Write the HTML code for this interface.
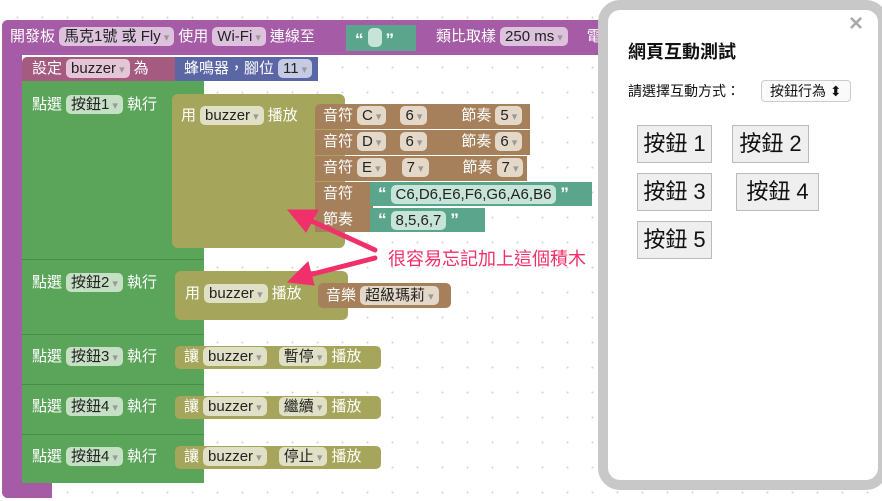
<!DOCTYPE html>
<html><head><meta charset="utf-8"><style>
*{box-sizing:border-box;margin:0;padding:0}
body{width:882px;height:501px;overflow:hidden;position:relative;background:#fff;font-family:"Liberation Sans","Noto Sans CJK TC",sans-serif;font-size:15px;color:#fff}
.grid{position:absolute;inset:0;background-image:radial-gradient(circle,#d4d4d4 0.8px,transparent 1.2px);background-size:25px 25px;background-position:5px 5px}
.b{position:absolute}
.t{position:absolute;white-space:nowrap;font-size:15px;line-height:20px}
.f{display:inline-block;border-radius:5px;padding:0 5px 0 5px;height:19px;line-height:19px;color:#222;margin:0 4px}
.f:after{content:" ▾";font-size:11px;color:#999}
.pu{background:#a55ba5}.pf{background:#dcc2dc}
.gr{background:#5ba55b}.gf{background:#c6e0c6}
.ol{background:#a5a55b}.of{background:#e0e0c6}
.br{background:#a5805b}.bf{background:#e4d8c8}
.te{background:#5ba58c}.tf{background:#c6e4d8}
.tf:after{content:""}
.btn{position:absolute;background:#efefef;border:1px solid #bbb;color:#111;font-size:22px;line-height:36px;text-align:center}
</style></head><body>
<div class="grid"></div>
<div class="b pu" style="left:2px;top:20px;width:736px;height:35px;border-radius:6px 0 0 0"></div>
<div class="b pu" style="left:2px;top:20px;width:20px;height:478px;border-radius:6px 0 0 6px"></div>
<div class="b pu" style="left:2px;top:483px;width:50px;height:15px;border-radius:0 0 0 6px"></div>
<div class="t" style="left:10px;top:27px">開發板<span class="f pf">馬克1號 或 Fly</span>使用<span class="f pf">Wi-Fi</span>連線至</div>
<div class="b te" style="left:346px;top:25px;width:70px;height:26px"></div>
<div class="t" style="left:355px;top:28px;font-weight:bold;font-size:17px">“<span class="f tf" style="width:14px;padding:0;vertical-align:-2px"></span>”</div>
<div class="t" style="left:436px;top:27px">類比取樣<span class="f pf">250 ms</span>　電</div>
<div class="b" style="left:22px;top:57px;width:153px;height:24px;background:#a55b80;border-radius:5px 0 0 0"></div>
<div class="t" style="left:32px;top:59px">設定<span class="f" style="background:#e4c6d6">buzzer</span>為</div>
<div class="b" style="left:175px;top:57px;width:143px;height:24px;background:#5b67a5"></div>
<div class="t" style="left:184px;top:59px">蜂鳴器，腳位<span class="f" style="background:#c6cbe4">11</span></div>
<div class="b gr" style="left:22px;top:81px;width:182px;height:179px;border-bottom:1px solid #4a8a4a"></div>
<div class="b gr" style="left:22px;top:260px;width:182px;height:75px;border-bottom:1px solid #4a8a4a"></div>
<div class="b gr" style="left:22px;top:335px;width:182px;height:50px;border-bottom:1px solid #4a8a4a"></div>
<div class="b gr" style="left:22px;top:385px;width:182px;height:50px;border-bottom:1px solid #4a8a4a"></div>
<div class="b gr" style="left:22px;top:435px;width:182px;height:48px"></div>
<div class="t" style="left:32px;top:95px">點選<span class="f gf">按鈕1</span>執行</div>
<div class="t" style="left:32px;top:273px">點選<span class="f gf">按鈕2</span>執行</div>
<div class="t" style="left:32px;top:347px">點選<span class="f gf">按鈕3</span>執行</div>
<div class="t" style="left:32px;top:397px">點選<span class="f gf">按鈕4</span>執行</div>
<div class="t" style="left:32px;top:447px">點選<span class="f gf">按鈕4</span>執行</div>
<div class="b ol" style="left:172px;top:94px;width:173px;height:154px;border-radius:6px"></div>
<div class="t" style="left:181px;top:106px">用<span class="f of">buzzer</span>播放</div>
<div class="b ol" style="left:175px;top:271px;width:173px;height:49px;border-radius:6px"></div>
<div class="t" style="left:185px;top:284px">用<span class="f of">buzzer</span>播放</div>
<div class="b ol" style="left:175px;top:346px;width:206px;height:23px;border-radius:5px"></div>
<div class="t" style="left:184px;top:347px">讓<span class="f of">buzzer</span> <span class="f of">暫停</span>播放</div>
<div class="b ol" style="left:175px;top:396px;width:206px;height:23px;border-radius:5px"></div>
<div class="t" style="left:184px;top:397px">讓<span class="f of">buzzer</span> <span class="f of">繼續</span>播放</div>
<div class="b ol" style="left:175px;top:446px;width:206px;height:23px;border-radius:5px"></div>
<div class="t" style="left:184px;top:447px">讓<span class="f of">buzzer</span> <span class="f of">停止</span>播放</div>
<div class="b br" style="left:315px;top:104px;width:215px;height:25px;border-radius:5px 0 0 0"></div>
<div class="b br" style="left:315px;top:130px;width:215px;height:25px"></div>
<div class="b br" style="left:315px;top:156px;width:212px;height:25px"></div>
<div class="b br" style="left:315px;top:182px;width:58px;height:50px"></div>
<div class="t" style="left:323px;top:106px">音符<span class="f bf">C</span><span class="f bf" style="margin-left:10px">6</span>　　節奏<span class="f bf">5</span></div>
<div class="t" style="left:323px;top:132px">音符<span class="f bf">D</span><span class="f bf" style="margin-left:10px">6</span>　　節奏<span class="f bf">6</span></div>
<div class="t" style="left:323px;top:158px">音符<span class="f bf">E</span><span class="f bf" style="margin-left:12px">7</span>　　節奏<span class="f bf">7</span></div>
<div class="t" style="left:323px;top:184px">音符</div>
<div class="t" style="left:323px;top:210px">節奏</div>
<div class="b te" style="left:370px;top:182px;width:222px;height:24px"></div>
<div class="t" style="left:378px;top:184px;font-weight:bold;font-size:17px">“<span class="f tf" style="font-weight:normal;font-size:15px">C6,D6,E6,F6,G6,A6,B6</span>”</div>
<div class="b te" style="left:370px;top:208px;width:115px;height:24px"></div>
<div class="t" style="left:378px;top:210px;font-weight:bold;font-size:17px">“<span class="f tf" style="font-weight:normal;font-size:15px">8,5,6,7</span>”</div>
<div class="b br" style="left:318px;top:283px;width:133px;height:25px;border-radius:5px"></div>
<div class="t" style="left:326px;top:286px">音樂<span class="f bf">超級瑪莉</span></div>
<svg class="b" style="left:0;top:0" width="882" height="501"><g fill="#f0306a" stroke="#f0306a" stroke-width="5" stroke-linecap="round">
<line x1="375" y1="250" x2="305" y2="218"/><polygon points="288,210 318,210 306,232" stroke-width="1"/>
<line x1="375" y1="258" x2="305" y2="276"/><polygon points="288,282 308,262 314,285" stroke-width="1"/></g></svg>
<div class="t" style="left:388px;top:247px;font-size:18px;line-height:24px;color:#ef3068">很容易忘記加上這個積木</div>
<div class="b" style="left:598px;top:0;width:290px;height:490px;border:10px solid #c8c8c8;border-radius:22px;background:#fff"></div>
<div class="t" style="left:849px;top:14px;font-size:24px;color:#aaa;font-weight:bold">×</div>
<div class="t" style="left:628px;top:40px;font-size:18px;line-height:24px;color:#111;font-weight:bold">網頁互動測試</div>
<div class="t" style="left:628px;top:81px;color:#111;font-size:14px">請選擇互動方式：</div>
<div class="b" style="left:761px;top:80px;width:90px;height:22px;border:1px solid #ccc;border-radius:4px;color:#111;font-size:14px;line-height:20px;padding-left:8px;background:#fafafa">按鈕行為 ⬍</div>
<div class="btn" style="left:637px;top:125px;width:75px;height:38px">按鈕 1</div>
<div class="btn" style="left:732px;top:125px;width:77px;height:38px">按鈕 2</div>
<div class="btn" style="left:637px;top:173px;width:75px;height:38px">按鈕 3</div>
<div class="btn" style="left:736px;top:173px;width:83px;height:38px">按鈕 4</div>
<div class="btn" style="left:637px;top:221px;width:75px;height:38px">按鈕 5</div>
</body></html>
